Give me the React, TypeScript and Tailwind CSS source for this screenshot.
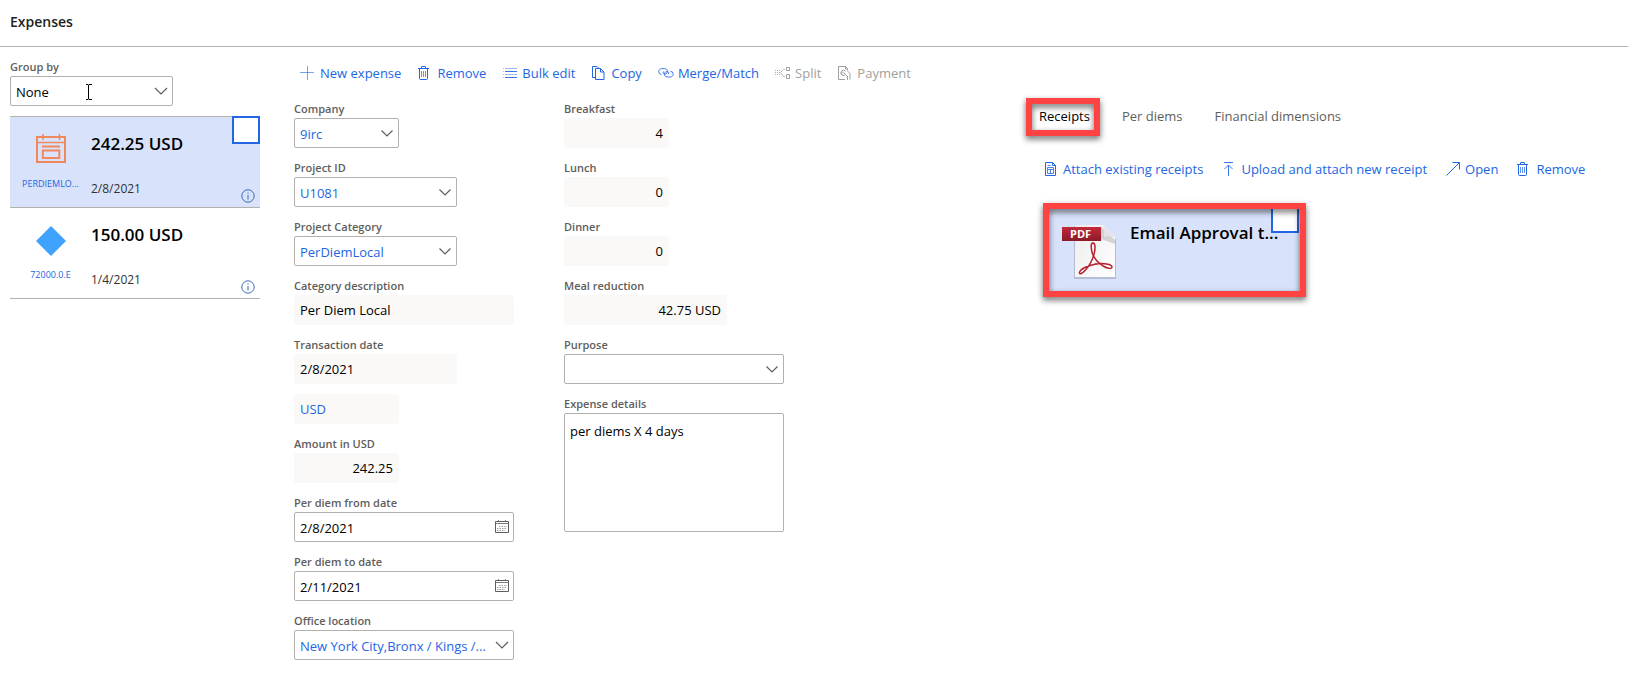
import React, { useId } from "react";

const blue = "text-[#2266e3]";

type IconProps = { className?: string };

const svgBase = {
  fill: "none",
  stroke: "currentColor",
  strokeWidth: 1,
  "aria-hidden": true,
} as const;

function PlusIcon() {
  return (
    <svg {...svgBase} width="16" height="16" viewBox="0 0 16 16">
      <path d="M0 7.500h14M7.500 1v14" opacity="0.6" />
    </svg>
  );
}

function TrashIcon() {
  return (
    <svg {...svgBase} width="16" height="16" viewBox="0 0 16 16">
      <path d="M1 3.500h11M4.500 3.500v-1.500a.5.5 0 0 1 .5-.5h3a.5.5 0 0 1 .5.5v1.500M2.500 3.500v10a1 1 0 0 0 1 1h6a1 1 0 0 0 1-1v-10" />
      <path d="M4.500 6v6M6.500 6v6M8.500 6v6" opacity="0.7" />
    </svg>
  );
}

function ListIcon() {
  return (
    <svg {...svgBase} width="16" height="16" viewBox="0 0 16 16">
      <path d="M3 3.500H15M3 9.500H15" opacity="0.45" />
      <path d="M3 6.500H15M3 12.500H15" opacity="0.9" />
      <path d="M1 3.500h1M1 6.500h1M1 9.500h1M1 12.500h1" opacity="0.4" />
    </svg>
  );
}

function CopyIcon() {
  return (
    <svg {...svgBase} width="16" height="16" viewBox="0 0 16 16">
      <path d="M4.500 12.500h-3v-11h4.500l2 2" />
      <path d="M4.500 3.500h5l3.500 3.500v7.500h-8.500zM9.500 3.500v3.500h3.500" />
    </svg>
  );
}

function LinkIcon() {
  return (
    <svg {...svgBase} width="16" height="16" viewBox="0 0 16 16">
      <path d="M3.500 9.500a3 3 0 0 1-2.800-3c0-1.600 1.300-2.900 3-2.900h2.800c1.800 0 3.100 1.200 3.100 2.800 0 1.500-1.200 2.600-2.700 2.600-1 0-1.700-.6-1.700-1.400 0-.6.400-1 .9-1.200" opacity="0.85" />
      <path d="M12.300 6.200a3 3 0 0 1 2.900 3c0 1.600-1.400 2.800-3 2.800H9.400c-1.800 0-3.100-1.200-3.100-2.800 0-1.500 1.200-2.600 2.700-2.600 1 0 1.700.6 1.700 1.400 0 .6-.4 1-.9 1.200" opacity="0.85" />
    </svg>
  );
}

function SplitIcon() {
  return (
    <svg {...svgBase} width="16" height="16" viewBox="0 0 16 16">
      <path d="M11.500 2.500h3v3h-3zM11.500 9.500h3v4h-3z" />
      <path d="M10 4.500H8.500l-3 3 3 4H10" opacity="0.7" />
      <path d="M0 5.500h5M0 7.500h5M0 9.500h5" strokeDasharray="1 1" opacity="0.8" />
    </svg>
  );
}

function PaymentIcon() {
  return (
    <svg {...svgBase} width="16" height="16" viewBox="0 0 16 16">
      <path d="M8 14.500H1.500v-13h7l2 2v2M8.500 1.500v2.500h2" />
      <path d="M8.500 6.200a2.600 2.600 0 1 0 .3 2.800M5.500 9.500a1.200 1.200 0 1 1 1.200-2" />
      <path d="M7 8l4 4M10.500 6l2.500 2.500v6M10.500 12v3" />
    </svg>
  );
}

function AttachIcon() {
  return (
    <svg {...svgBase} width="16" height="16" viewBox="0 0 16 16">
      <path d="M2.500 1.500h7l3 3v10h-10zM9.500 1.500v3h3" />
      <path d="M4.500 6.500h6v6h-6zM4.500 8.500h6M7.500 8.500v4M4.500 4.500h3" opacity="0.8" />
    </svg>
  );
}

function UploadIcon() {
  return (
    <svg {...svgBase} width="16" height="16" viewBox="0 0 16 16">
      <path d="M3 1.500h9M7.500 4v11M3.500 8l4-4 4 4" opacity="0.9" />
    </svg>
  );
}

function OpenIcon() {
  return (
    <svg {...svgBase} width="16" height="16" viewBox="0 0 16 16">
      <path d="M1.500 14.500l13-13M7.500 1.500h7v7" />
    </svg>
  );
}

function ChevronIcon({ className = "" }: IconProps) {
  return (
    <svg {...svgBase} strokeWidth={1.2} width="14" height="8" viewBox="0 0 14 8" className={className}>
      <path d="M1 1l6 6 6-6" />
    </svg>
  );
}

function SmallChevronIcon({ className = "" }: IconProps) {
  return (
    <svg {...svgBase} strokeWidth={1.2} width="12" height="7" viewBox="0 0 12 7" className={className}>
      <path d="M.5 .5l5.500 5.500 5.500-5.500" />
    </svg>
  );
}

function CalendarIcon() {
  return (
    <svg {...svgBase} width="14" height="14" viewBox="0 0 14 14">
      <path d="M.5 1.500h13v11H.5z" />
      <path d="M.5 3.500h13M3.500 0v2M10.500 0v2" opacity="0.8" />
      <path d="M4 6.500h8M2 8.500h10M2 10.500h8" strokeDasharray="1.500 1" opacity="0.6" />
    </svg>
  );
}

function InfoIcon() {
  return (
    <svg {...svgBase} width="14" height="14" viewBox="0 0 14 14">
      <circle cx="7" cy="7" r="6.200" />
      <path d="M7 6v4.500M7 3.500v1.200" />
    </svg>
  );
}

function PerDiemIcon() {
  return (
    <svg width="30" height="29" viewBox="0 0 30 29" fill="none" stroke="#f0875f" strokeWidth="2" className="-mt-1" aria-hidden="true">
      <path d="M1 3h28v25H1z" />
      <path d="M1 8.500h28" strokeWidth="1.500" />
      <path d="M7 0v6M23.500 0v6" strokeWidth="1.500" />
      <path d="M6 12.500h18" />
      <path d="M6.800 16.500h16.500v7.500H6.800z" />
    </svg>
  );
}

function DiamondIcon() {
  return (
    <svg width="30" height="30" viewBox="0 0 30 30" aria-hidden="true">
      <path d="M15 0l15 15-15 15L0 15z" fill="#40a2ff" />
    </svg>
  );
}

function PdfIcon() {
  return (
    <svg width="54" height="56" viewBox="0 0 54 56" className="shrink-0" aria-hidden="true">
      <defs>
        <linearGradient id="banner" x1="0" y1="0" x2="0" y2="1">
          <stop offset="0" stopColor="#c4283b" />
          <stop offset="1" stopColor="#8a1a28" />
        </linearGradient>
        <linearGradient id="page" x1="0" y1="0" x2="1" y2="1">
          <stop offset="0" stopColor="#ececec" />
          <stop offset="1" stopColor="#ffffff" />
        </linearGradient>
      </defs>
      <path d="M12 1h29l13 13v40H12z" fill="#8f98ac" opacity="0.5" />
      <path d="M13 0h28l12 12v40H13z" fill="url(#page)" />
      <path d="M39 2l14 13v4L39 14z" fill="#a8a8ac" opacity="0.45" />
      <path d="M41 0l12 12c-4-1-8-1-11 0 .5-4 0-8-1-12z" fill="#e4e4e6" />
      <path d="M0 2h39v14H0z" fill="url(#banner)" />
      <text x="8" y="13" fill="#ffffff" fontSize="11" fontWeight="700" fontFamily="'Open Sans', sans-serif">
        PDF
      </text>
      <g fill="none" stroke="#b5202f" strokeLinecap="round" strokeLinejoin="round">
        <path d="M31 18c-2.500 0-2 5-1 9 1.500 6 5 10 11 14 5 3 9 3 9 1 0-3-9-4-16-3" strokeWidth="1.500" />
        <path d="M31 18c2 0 2.500 4 1.500 9-1 6-5 14-9 18-3 3.500-6.500 5-6 2.500C18 44 26 40.500 34 39" strokeWidth="1.500" />
      </g>
    </svg>
  );
}

function TextCursor() {
  return (
    <svg width="8" height="16" viewBox="0 0 8 16" fill="none" stroke="#000000" strokeWidth="1" className="pointer-events-none absolute left-[75px] top-[8px]" aria-hidden="true">
      <path d="M1 .5h2l.5 .5 .5-.5h3M3.500 1v14M1 15.500h2l.5-.5 .5 .5h3" />
    </svg>
  );
}

function Action({ icon, label, disabled = false }: { icon: React.ReactNode; label: string; disabled?: boolean }) {
  return (
    <button
      type="button"
      disabled={disabled}
      className={`flex items-center gap-1 whitespace-nowrap text-[13px] leading-5 ${disabled ? "text-[#a19f9d]" : blue}`}
    >
      {icon}
      {label}
    </button>
  );
}

function Label({ htmlFor, children }: { htmlFor: string; children: React.ReactNode }) {
  return (
    <label htmlFor={htmlFor} className="block h-[19px] text-[11px] font-semibold leading-5 text-[#605e5c]">
      {children}
    </label>
  );
}

function SelectField({
  label,
  value,
  width,
  link = true,
  large = false,
  children,
}: {
  label: string;
  value: string;
  width: string;
  link?: boolean;
  large?: boolean;
  children?: React.ReactNode;
}) {
  const id = useId();
  return (
    <div>
      <Label htmlFor={id}>{label}</Label>
      <div className={`relative ${width}`}>
        <select
          id={id}
          className={`block h-[30px] w-full appearance-none rounded-[2px] border border-[#b3b0ad] bg-white pl-[5px] pr-5 pt-px text-[13px] leading-5 ${link ? blue : "text-black"}`}
        >
          <option>{value}</option>
        </select>
        {large ? (
          <ChevronIcon className="pointer-events-none absolute right-[5px] top-[11px] text-[#605e5c]" />
        ) : (
          <SmallChevronIcon className="pointer-events-none absolute right-[6px] top-[12px] text-[#605e5c]" />
        )}
        {children}
      </div>
    </div>
  );
}

function ReadonlyField({
  label,
  value,
  width,
  right = false,
  link = false,
}: {
  label?: string;
  value: string;
  width: string;
  right?: boolean;
  link?: boolean;
}) {
  const id = useId();
  return (
    <div>
      {label && <Label htmlFor={id}>{label}</Label>}
      <input
        id={id}
        readOnly
        aria-label={label ? undefined : "Currency"}
        value={value}
        className={`block h-[30px] rounded-[2px] bg-[#faf9f8] px-[6px] text-[13px] leading-5 ${width} ${right ? "text-right" : ""} ${link ? blue : "text-black"}`}
      />
    </div>
  );
}

function DateField({ label, value }: { label: string; value: string }) {
  const id = useId();
  return (
    <div>
      <Label htmlFor={id}>{label}</Label>
      <div className="flex h-[30px] w-[220px] items-center rounded-[2px] border border-[#b3b0ad] pl-[5px] pr-1">
        <input id={id} defaultValue={value} className="min-w-0 flex-1 pt-px text-[13px] leading-5 text-black" />
        <button type="button" aria-label={`Pick ${label}`} className="text-[#605e5c]">
          <CalendarIcon />
        </button>
      </div>
    </div>
  );
}

function ExpenseRow({
  icon,
  category,
  amount,
  date,
  selected = false,
}: {
  icon: React.ReactNode;
  category: string;
  amount: string;
  date: string;
  selected?: boolean;
}) {
  return (
    <li className={`relative flex h-[91px] border-b border-[#b3b0ad] ${selected ? "bg-[#d8e3fb]" : ""}`}>
      <div className="flex w-[81px] flex-col items-center justify-between pb-[15px] pt-[18px]">
        <div className="flex h-[30px] items-center">{icon}</div>
        <a href="#category" className={`text-[9px] leading-4 ${blue}`}>
          {category}
        </a>
      </div>
      <div className="flex flex-col justify-between pb-2 pt-[15px]">
        <span className="text-[17px] font-semibold leading-6 text-black">{amount}</span>
        <span className="text-[12px] leading-5 text-[#323130]">{date}</span>
      </div>
      {selected && (
        <input
          type="checkbox"
          aria-label={`Select ${amount}`}
          className="absolute -top-px right-0 size-7 appearance-none border-2 border-[#2266e3] bg-white"
        />
      )}
      <button type="button" aria-label="Information" className="absolute bottom-[4px] right-[5px] text-[#3b69b5]">
        <InfoIcon />
      </button>
    </li>
  );
}

const callout = "pointer-events-none absolute border-[6px] border-[#ff4343] drop-shadow-[0_3px_3px_rgba(0,0,0,0.6)]";

export default function App() {
  const detailsId = useId();
  return (
    <div className="min-h-screen bg-white font-['Open_Sans','Noto_Sans',sans-serif] text-black">
      <header className="flex h-[47px] items-center border-b border-[#b3b0ad] px-[10px] pb-[2px]">
        <h1 className="text-[14px] font-semibold leading-6 text-[#201f1e]">Expenses</h1>
      </header>

      <div className="flex pl-[10px]">
        <aside className="w-[250px] shrink-0 pt-[10px]">
          <SelectField label="Group by" value="None" width="w-[163px]" link={false} large>
            <TextCursor />
          </SelectField>
          <ul className="mt-[10px] border-t border-[#b3b0ad]">
            <ExpenseRow icon={<PerDiemIcon />} category="PERDIEMLO..." amount="242.25 USD" date="2/8/2021" selected />
            <ExpenseRow icon={<DiamondIcon />} category="72000.0.E" amount="150.00 USD" date="1/4/2021" />
          </ul>
        </aside>

        <main className="min-w-0 flex-1 pl-[34px] pt-4">
          <div role="toolbar" aria-label="Expense actions" className="flex gap-4 pl-[6px]">
            <Action icon={<PlusIcon />} label="New expense" />
            <Action icon={<TrashIcon />} label="Remove" />
            <Action icon={<ListIcon />} label="Bulk edit" />
            <Action icon={<CopyIcon />} label="Copy" />
            <Action icon={<LinkIcon />} label="Merge/Match" />
            <Action icon={<SplitIcon />} label="Split" disabled />
            <Action icon={<PaymentIcon />} label="Payment" disabled />
          </div>

          <form className="mt-4 flex gap-[50px]">
            <div className="flex w-[220px] flex-col gap-[10px]">
              <SelectField label="Company" value="9irc" width="w-[105px]" />
              <SelectField label="Project ID" value="U1081" width="w-[163px]" />
              <SelectField label="Project Category" value="PerDiemLocal" width="w-[163px]" />
              <ReadonlyField label="Category description" value="Per Diem Local" width="w-[220px]" />
              <ReadonlyField label="Transaction date" value="2/8/2021" width="w-[163px]" />
              <ReadonlyField value="USD" width="w-[105px]" link />
              <ReadonlyField label="Amount in USD" value="242.25" width="w-[105px]" right />
              <DateField label="Per diem from date" value="2/8/2021" />
              <DateField label="Per diem to date" value="2/11/2021" />
              <SelectField label="Office location" value="New York City,Bronx / Kings /..." width="w-[220px]" large />
            </div>
            <div className="flex w-[220px] flex-col gap-[10px]">
              <ReadonlyField label="Breakfast" value="4" width="w-[105px]" right />
              <ReadonlyField label="Lunch" value="0" width="w-[105px]" right />
              <ReadonlyField label="Dinner" value="0" width="w-[105px]" right />
              <ReadonlyField label="Meal reduction" value="42.75 USD" width="w-[163px]" right />
              <SelectField label="Purpose" value="" width="w-[220px]" />
              <div>
                <Label htmlFor={detailsId}>Expense details</Label>
                <textarea
                  id={detailsId}
                  defaultValue="per diems X 4 days"
                  className="block h-[119px] w-full resize-none rounded-[2px] border border-[#b3b0ad] px-[5px] py-[7px] text-[13px] leading-5 text-black"
                />
              </div>
            </div>
          </form>
        </main>

        <section aria-label="Expense attachments" className="w-[602px] shrink-0 pl-[13px] pt-[59px]">
          <div role="tablist" className="flex gap-8 text-[13px] leading-5 text-[#605e5c]">
            <button type="button" role="tab" aria-selected="true" className="relative text-black">
              Receipts
              <span className={`${callout} -bottom-[10px] -left-[13px] -right-[10px] -top-[8px]`} />
            </button>
            <button type="button" role="tab" aria-selected="false">
              Per diems
            </button>
            <button type="button" role="tab" aria-selected="false">
              Financial dimensions
            </button>
          </div>

          <div role="toolbar" aria-label="Receipt actions" className="mt-[33px] flex gap-[18px] pl-1">
            <Action icon={<AttachIcon />} label="Attach existing receipts" />
            <Action icon={<UploadIcon />} label="Upload and attach new receipt" />
            <Action icon={<OpenIcon />} label="Open" />
            <Action icon={<TrashIcon />} label="Remove" />
          </div>

          <div className="relative ml-[9px] mt-7 flex h-[87px] w-[253px] items-start gap-[14px] bg-[#d8e3fb] pl-[14px] pt-[14px]">
            <div className="pt-1">
              <PdfIcon />
            </div>
            <span className="whitespace-nowrap text-[17px] font-semibold leading-6 text-black">Email Approval t...</span>
            <input
              type="checkbox"
              aria-label="Select Email Approval"
              className="absolute -top-[2px] right-[2px] size-7 appearance-none border-2 border-[#2266e3] bg-white"
            />
            <span className={`${callout} -inset-x-[5px] -bottom-[3px] -top-[4px]`} />
          </div>
        </section>
      </div>
    </div>
  );
}
